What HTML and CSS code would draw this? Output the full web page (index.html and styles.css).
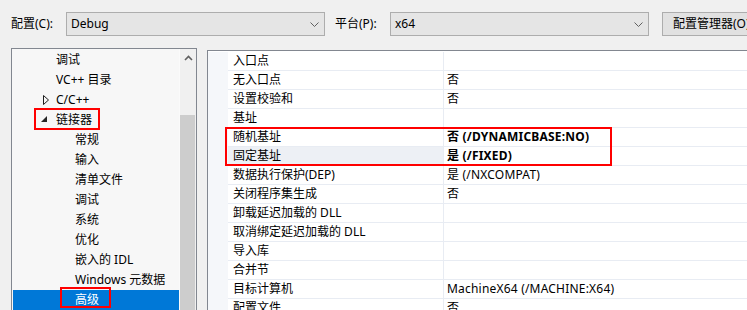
FILE: index.html
```html
<!DOCTYPE html>
<html lang="zh-CN">
<head>
<meta charset="utf-8">
<title>属性页</title>
<link rel="stylesheet" href="styles.css">
</head>
<body>
<div class="toolbar">
  <span class="lbl lbl-config">配置(C):</span>
  <div class="combo combo-config"><span class="combo-text">Debug</span><svg class="chev" width="9" height="5" viewBox="0 0 9 5"><polyline points="0.5,0.5 4.5,4.5 8.5,0.5" fill="none" stroke="#606060" stroke-width="1"/></svg></div>
  <span class="lbl lbl-platform">平台(P):</span>
  <div class="combo combo-platform"><span class="combo-text">x64</span><svg class="chev" width="9" height="5" viewBox="0 0 9 5"><polyline points="0.5,0.5 4.5,4.5 8.5,0.5" fill="none" stroke="#606060" stroke-width="1"/></svg></div>
  <div class="btn">配置管理器(O)...</div>
</div>

<div class="main">
  <div class="tree">
    <div class="tree-list">
      <div class="trow l1"><span class="exp"></span><span>调试</span></div>
      <div class="trow l1"><span class="exp"></span><span>VC++ 目录</span></div>
      <div class="trow l1"><span class="exp"><svg width="7" height="10" viewBox="0 0 7 10"><polygon points="0.5,0.5 5.5,5 0.5,9.5" fill="none" stroke="#1e1e1e" stroke-width="1"/></svg></span><span>C/C++</span></div>
      <div class="trow l1"><span class="exp exp-open"><svg width="7" height="7" viewBox="0 0 7 7"><polygon points="6,0 6,6 0,6" fill="#262626"/></svg></span><span>链接器</span></div>
      <div class="trow l2">常规</div>
      <div class="trow l2">输入</div>
      <div class="trow l2">清单文件</div>
      <div class="trow l2">调试</div>
      <div class="trow l2">系统</div>
      <div class="trow l2">优化</div>
      <div class="trow l2">嵌入的 IDL</div>
      <div class="trow l2">Windows 元数据</div>
      <div class="trow l2 selected">高级</div>
    </div>
    <div class="vscroll">
      <div class="sb-arrow"><svg width="9" height="6" viewBox="0 0 9 6"><polyline points="1,5 4.5,1.5 8,5" fill="none" stroke="#606060" stroke-width="1.6"/></svg></div>
      <div class="sb-thumb"></div>
    </div>
    <div class="mark mark-linker"></div>
    <div class="mark mark-advanced"></div>
  </div>

  <div class="grid">
    <div class="prow"><span class="gut"></span><span class="pname">入口点</span><span class="pval"></span></div>
    <div class="prow"><span class="gut"></span><span class="pname">无入口点</span><span class="pval">否</span></div>
    <div class="prow"><span class="gut"></span><span class="pname">设置校验和</span><span class="pval">否</span></div>
    <div class="prow"><span class="gut"></span><span class="pname">基址</span><span class="pval"></span></div>
    <div class="prow"><span class="gut"></span><span class="pname">随机基址</span><span class="pval bold">否 (/DYNAMICBASE:NO)</span></div>
    <div class="prow"><span class="gut"></span><span class="pname hl">固定基址</span><span class="pval bold">是 (/FIXED)</span></div>
    <div class="prow"><span class="gut"></span><span class="pname">数据执行保护(DEP)</span><span class="pval">是 (/NXCOMPAT)</span></div>
    <div class="prow"><span class="gut"></span><span class="pname">关闭程序集生成</span><span class="pval">否</span></div>
    <div class="prow"><span class="gut"></span><span class="pname">卸载延迟加载的 DLL</span><span class="pval"></span></div>
    <div class="prow"><span class="gut"></span><span class="pname">取消绑定延迟加载的 DLL</span><span class="pval"></span></div>
    <div class="prow"><span class="gut"></span><span class="pname">导入库</span><span class="pval"></span></div>
    <div class="prow"><span class="gut"></span><span class="pname">合并节</span><span class="pval"></span></div>
    <div class="prow"><span class="gut"></span><span class="pname">目标计算机</span><span class="pval">MachineX64 (/MACHINE:X64)</span></div>
    <div class="prow"><span class="gut"></span><span class="pname">配置文件</span><span class="pval">否</span></div>
    <div class="mark mark-base"></div>
  </div>
</div>
</body>
</html>
```

FILE: styles.css
```css
* { box-sizing: border-box; }

html, body {
  margin: 0;
  padding: 0;
}

body {
  width: 747px;
  height: 310px;
  overflow: hidden;
  background: #f0f0f0;
  color: #000;
  font-family: "Noto Sans", "Noto Sans CJK SC", sans-serif;
  font-size: 12px;
}

.toolbar {
  display: flex;
  align-items: center;
  padding: 12px 0 0 11px;
  height: 36px;
  white-space: nowrap;
}

.lbl {
  flex: 0 0 auto;
  line-height: 24px;
}
.lbl-config { width: 55px; }
.lbl-platform { width: 55px; margin-left: 10px; }

.combo {
  flex: 0 0 259px;
  height: 24px;
  display: flex;
  align-items: center;
  justify-content: space-between;
  background: #e5e5e5;
  border: 1px solid #adadad;
  padding: 0 5px 0 4px;
}
.combo-text { line-height: 22px; }
.chev { display: block; margin-top: 1px; }

.btn {
  flex: 0 0 120px;
  height: 24px;
  margin-left: 13px;
  background: #e1e1e1;
  border: 1px solid #adadad;
  padding-left: 10px;
  line-height: 22px;
  overflow: hidden;
}

.main {
  display: flex;
  align-items: flex-start;
  padding-left: 11px;
  margin-top: 12px;
}

/* tree */
.tree {
  position: relative;
  flex: 0 0 186px;
  height: 280px;
  display: flex;
  border: 1px solid #828790;
  background: #f7f7f7;
}

.tree-list {
  flex: 1 1 auto;
  padding-left: 1px;
  padding-top: 1px;
}

.trow {
  display: flex;
  align-items: center;
  height: 20px;
  line-height: 20px;
  white-space: nowrap;
}
.trow.l1 { padding-left: 27px; }
.trow.l2 { padding-left: 62px; }
.trow.selected {
  background: #0078d7;
  color: #fff;
}

.exp {
  flex: 0 0 16px;
  height: 20px;
  display: flex;
  align-items: center;
  padding-left: 3px;
}
.exp svg { display: block; }
.exp-open { padding-left: 1px; align-items: flex-start; padding-top: 6px; }

.vscroll {
  flex: 0 0 17px;
  background: #f0f0f0;
  border-left: 1px solid #fafafa;
}
.sb-arrow {
  height: 17px;
  display: flex;
  align-items: center;
  justify-content: center;
}
.sb-arrow svg { display: block; }
.sb-thumb {
  margin-top: 49px;
  height: 220px;
  width: 15px;
  background: #cdcdcd;
}

/* annotation marks */
.mark {
  position: absolute;
  border: 2px solid #f00;
  pointer-events: none;
}
.mark-linker { left: 22px; top: 59px; width: 66px; height: 22px; }
.mark-advanced { left: 48px; top: 238px; width: 51px; height: 21px; }

/* property grid */
.grid {
  position: relative;
  flex: 0 0 560px;
  margin-left: 10px;
  margin-top: 2px;
  height: 280px;
  border-left: 1px solid #828790;
  border-top: 1px solid #828790;
  background: #fff;
  padding-top: 1px;
}

.prow {
  display: grid;
  grid-template-columns: 20px 216px 1fr;
  height: 19px;
}

.gut {
  background: #f5f7fa;
}

.pname, .pval {
  border-bottom: 1px solid #e8ecf3;
  line-height: 18px;
  white-space: nowrap;
  overflow: hidden;
}
.pname {
  padding-left: 5px;
  border-right: 1px solid #e8ecf3;
}
.pname.hl { background: #edf0f5; }
.pval { padding-left: 3px; letter-spacing: 0.2px; }
.pval.bold { font-weight: 700; }

.mark-base { left: 17px; top: 76px; width: 387px; height: 39px; }
```
